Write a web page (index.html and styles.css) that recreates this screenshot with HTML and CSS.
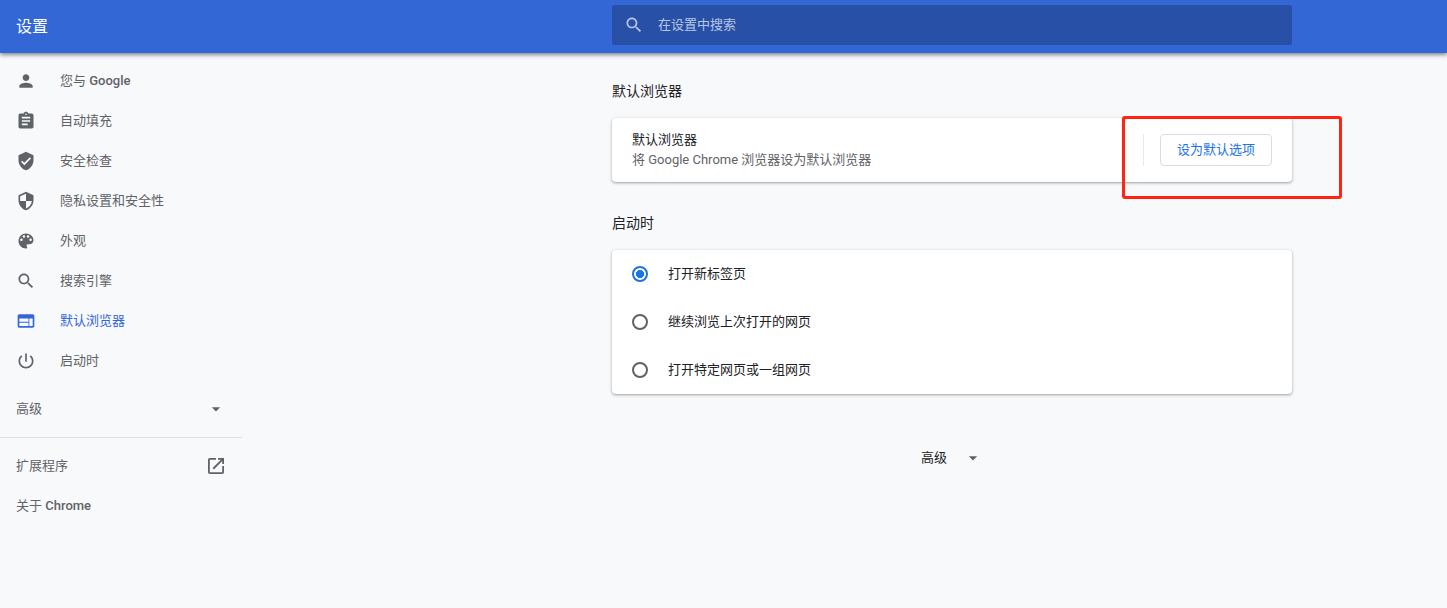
FILE: index.html
```html
<!DOCTYPE html>
<html lang="zh-CN">
<head>
<meta charset="utf-8">
<title>设置</title>
<link rel="stylesheet" href="styles.css">
</head>
<body>
<header class="toolbar">
  <h1 class="toolbar-title">设置</h1>
  <div class="toolbar-center">
    <label class="search">
      <svg class="icon" viewBox="0 0 24 24" aria-hidden="true"><path d="M15.5 14h-.79l-.28-.27C15.41 12.59 16 11.11 16 9.5 16 5.91 13.09 3 9.5 3S3 5.91 3 9.5 5.91 16 9.5 16c1.61 0 3.09-.59 4.23-1.57l.27.28v.79l5 4.99L20.49 19l-4.99-5zm-6 0C7.01 14 5 11.99 5 9.5S7.01 5 9.5 5 14 7.01 14 9.5 11.99 14 9.5 14z"/></svg>
      <input class="search-input" type="text" placeholder="在设置中搜索" aria-label="在设置中搜索">
    </label>
  </div>
</header>
<div class="layout">
  <nav class="sidebar">
    <a class="menu-item" href="#people"><svg class="icon" viewBox="0 0 24 24"><path d="M12 12c2.21 0 4-1.79 4-4s-1.79-4-4-4-4 1.79-4 4 1.79 4 4 4zm0 2c-2.67 0-8 1.34-8 4v2h16v-2c0-2.66-5.33-4-8-4z"/></svg><span>您与 <span class="latin">Google</span></span></a>
    <a class="menu-item" href="#autofill"><svg class="icon" viewBox="0 0 24 24"><path d="M19 3h-4.18C14.4 1.84 13.3 1 12 1c-1.3 0-2.4.84-2.82 2H5c-1.100 0-2 .9-2 2v14c0 1.100.9 2 2 2h14c1.100 0 2-.9 2-2V5c0-1.100-.9-2-2-2zm-7 0c.55 0 1 .45 1 1s-.45 1-1 1-1-.45-1-1 .45-1 1-1zm2 14H7v-2h7v2zm3-4H7v-2h10v2zm0-4H7V7h10v2z"/></svg><span>自动填充</span></a>
    <a class="menu-item" href="#safety"><svg class="icon" viewBox="0 0 24 24"><path d="M12 1L3 5v6c0 5.550 3.840 10.740 9 12 5.160-1.260 9-6.450 9-12V5l-9-4zm-2 16l-4-4 1.410-1.410L10 14.170l6.590-6.590L18 9l-8 8z"/></svg><span>安全检查</span></a>
    <a class="menu-item" href="#privacy"><svg class="icon" viewBox="0 0 24 24"><path d="M12 1L3 5v6c0 5.550 3.840 10.740 9 12 5.160-1.260 9-6.450 9-12V5l-9-4zm0 10.990h7c-.53 4.120-3.280 7.790-7 8.940V12H5V6.300l7-3.110v8.800z"/></svg><span>隐私设置和安全性</span></a>
    <a class="menu-item" href="#appearance"><svg class="icon" viewBox="0 0 24 24"><path d="M12 3c-4.970 0-9 4.030-9 9s4.030 9 9 9c.83 0 1.500-.67 1.500-1.500 0-.39-.15-.74-.39-1.010-.23-.26-.38-.61-.38-.99 0-.83.67-1.500 1.500-1.500H16c2.760 0 5-2.240 5-5 0-4.420-4.030-8-9-8zm-5.500 9c-.83 0-1.500-.67-1.500-1.500S5.670 9 6.500 9 8 9.670 8 10.500 7.330 12 6.500 12zm3-4C8.670 8 8 7.330 8 6.500S8.670 5 9.500 5s1.500.67 1.500 1.500S10.330 8 9.500 8zm5 0c-.83 0-1.500-.67-1.500-1.500S13.670 5 14.500 5s1.500.67 1.500 1.500S15.330 8 14.500 8zm3 4c-.83 0-1.500-.67-1.500-1.500S16.670 9 17.500 9s1.500.67 1.500 1.500-.67 1.500-1.500 1.500z"/></svg><span>外观</span></a>
    <a class="menu-item" href="#search"><svg class="icon" viewBox="0 0 24 24"><path d="M15.500 14h-.79l-.28-.27C15.410 12.590 16 11.110 16 9.500 16 5.910 13.090 3 9.500 3S3 5.910 3 9.500 5.910 16 9.500 16c1.610 0 3.090-.59 4.230-1.570l.27.28v.79l5 4.990L20.490 19l-4.990-5zm-6 0C7.010 14 5 11.990 5 9.500S7.010 5 9.500 5 14 7.010 14 9.500 11.990 14 9.500 14z"/></svg><span>搜索引擎</span></a>
    <a class="menu-item menu-item-selected" href="#default-browser" aria-current="page"><svg class="icon" viewBox="0 0 24 24"><path d="M20 4H4c-1.100 0-1.990.9-1.990 2L2 18c0 1.100.9 2 2 2h16c1.100 0 2-.9 2-2V6c0-1.100-.9-2-2-2zm-5 14H4v-4h11v4zm0-5H4V9h11v4zm5 5h-4V9h4v9z"/></svg><span>默认浏览器</span></a>
    <a class="menu-item" href="#startup"><svg class="icon" viewBox="0 0 24 24"><path d="M13 3h-2v10h2V3zm4.830 2.170l-1.420 1.420C17.990 7.860 19 9.810 19 12c0 3.870-3.130 7-7 7s-7-3.130-7-7c0-2.190 1.010-4.140 2.580-5.420L6.170 5.170C4.230 6.820 3 9.260 3 12c0 4.970 4.030 9 9 9s9-4.030 9-9c0-2.740-1.230-5.180-3.170-6.830z"/></svg><span>启动时</span></a>
    <button class="menu-item menu-toggle" type="button"><span>高级</span><svg class="icon" viewBox="0 0 24 24"><path d="M7 10l5 5 5-5z"/></svg></button>
    <hr class="separator">
    <a class="menu-item menu-item-split" href="#extensions"><span>扩展程序</span><svg class="icon" viewBox="0 0 20 20"><path d="M16.200 16.200H3.800V3.800H10V2H3.800A1.800 1.800 0 0 0 2 3.800v12.400A1.800 1.800 0 0 0 3.800 18h12.400a1.800 1.800 0 0 0 1.800-1.800V10h-1.800zM12 2v1.800h2.900l-8.300 8.300 1.300 1.300 8.300-8.300V8H18V2z"/></svg></a>
    <a class="menu-item" href="#about"><span>关于 <span class="latin">Chrome</span></span></a>
  </nav>
  <main class="content">
    <section class="section">
      <h2 class="section-title">默认浏览器</h2>
      <div class="card card-default">
        <div class="card-text">
          <div>默认浏览器</div>
          <div class="secondary">将 Google Chrome 浏览器设为默认浏览器</div>
        </div>
        <div class="card-action"><button class="action-button" type="button">设为默认选项</button></div>
        <div class="highlight"></div>
      </div>
    </section>
    <section class="section">
      <h2 class="section-title">启动时</h2>
      <div class="card">
        <label class="radio-row"><input class="radio" type="radio" name="startup" checked><span>打开新标签页</span></label>
        <label class="radio-row"><input class="radio" type="radio" name="startup"><span>继续浏览上次打开的网页</span></label>
        <label class="radio-row"><input class="radio" type="radio" name="startup"><span>打开特定网页或一组网页</span></label>
      </div>
    </section>
    <button class="advanced" type="button"><span>高级</span><svg class="icon" viewBox="0 0 24 24"><path d="M7 10l5 5 5-5z"/></svg></button>
  </main>
</div>
</body>
</html>
```

FILE: styles.css
```css
:root {
  --side: 457px;
  --content: 680px;
  --grey: #5f6368;
  --blue: #3367d6;
  --accent: #1a73e8;
}

* {
  box-sizing: border-box;
}

body {
  margin: 0;
  min-height: 100vh;
  background: #f8f9fb;
  color: #202124;
  font: 400 13px/20px Roboto, "Noto Sans CJK SC", sans-serif;
}

button,
input {
  font: inherit;
  color: inherit;
}

.icon {
  width: 20px;
  height: 20px;
  flex: none;
  fill: currentColor;
}

.toolbar {
  position: relative;
  display: grid;
  grid-template-columns: var(--side) minmax(0, 1fr);
  padding: 5px 0 8px;
  background: var(--blue);
  color: #fff;
  box-shadow: 0 2px 4px rgba(0, 0, 0, 0.45);
}

.toolbar-title {
  margin: 0;
  padding: 10px 16px 6px;
  font-size: 16px;
  font-weight: 400;
  line-height: 24px;
}

.toolbar-center {
  display: flex;
  justify-content: center;
}

.search {
  display: flex;
  align-items: center;
  gap: 14px;
  width: 100%;
  max-width: var(--content);
  height: 40px;
  padding: 0 12px;
  border-radius: 2px;
  background: #2850a7;
  color: #b9c6e3;
}

.search-input {
  flex: 1;
  padding: 0;
  border: 0;
  outline: 0;
  background: none;
}

.search-input::placeholder {
  color: inherit;
  opacity: 1;
}

.layout {
  display: grid;
  grid-template-columns: var(--side) minmax(0, 1fr);
}

.sidebar {
  width: 242px;
  padding-top: 8px;
  color: var(--grey);
}

.menu-item {
  display: flex;
  align-items: center;
  gap: 24px;
  width: 100%;
  height: 40px;
  padding: 0 16px;
  border: 0;
  background: none;
  color: inherit;
  text-decoration: none;
}

.menu-item-selected {
  color: var(--blue);
}

.menu-toggle,
.menu-item-split {
  justify-content: space-between;
}

.menu-toggle {
  margin: 8px 0;
}

.latin {
  font-weight: 500;
}

.separator {
  margin: 0 0 8px;
  border: 0;
  border-top: 1px solid #dfe0e3;
}

.content {
  display: flex;
  flex-direction: column;
  align-items: center;
  padding-top: 28px;
}

.section {
  width: 100%;
  max-width: var(--content);
  margin-bottom: 31px;
}

.section-title {
  margin: 0 0 17px;
  font-size: 14px;
  font-weight: 400;
  line-height: 20px;
}

.card {
  position: relative;
  border-radius: 4px;
  background: #fff;
  box-shadow: 0 1px 2px rgba(60, 64, 67, 0.3), 0 1px 3px 1px rgba(60, 64, 67, 0.15);
}

.card-default {
  display: flex;
  align-items: center;
  justify-content: space-between;
  height: 64px;
  padding: 0 20px;
}

.secondary {
  color: var(--grey);
}

.card-action {
  padding-left: 16px;
  border-left: 1px solid #e8eaed;
}

.action-button {
  display: block;
  height: 32px;
  padding: 0 16px;
  border: 1px solid #dadce0;
  border-radius: 4px;
  background: #fff;
  color: var(--accent);
}

.highlight {
  position: absolute;
  top: -2px;
  right: -50px;
  width: 220px;
  height: 83px;
  border: 3px solid #ff2314;
  border-radius: 3px;
  pointer-events: none;
}

.radio-row {
  display: flex;
  align-items: center;
  gap: 20px;
  height: 48px;
  padding: 0 20px;
}

.radio {
  appearance: none;
  width: 16px;
  height: 16px;
  margin: 0;
  border: 2px solid var(--grey);
  border-radius: 50%;
}

.radio:checked {
  border-color: var(--accent);
  background: radial-gradient(circle, var(--accent) 55%, transparent 60%) center / 10px 10px no-repeat;
}

.advanced {
  display: flex;
  align-items: center;
  gap: 16px;
  height: 32px;
  margin-top: 17px;
  padding: 0;
  border: 0;
  background: none;
}

.advanced .icon {
  color: var(--grey);
}
```
